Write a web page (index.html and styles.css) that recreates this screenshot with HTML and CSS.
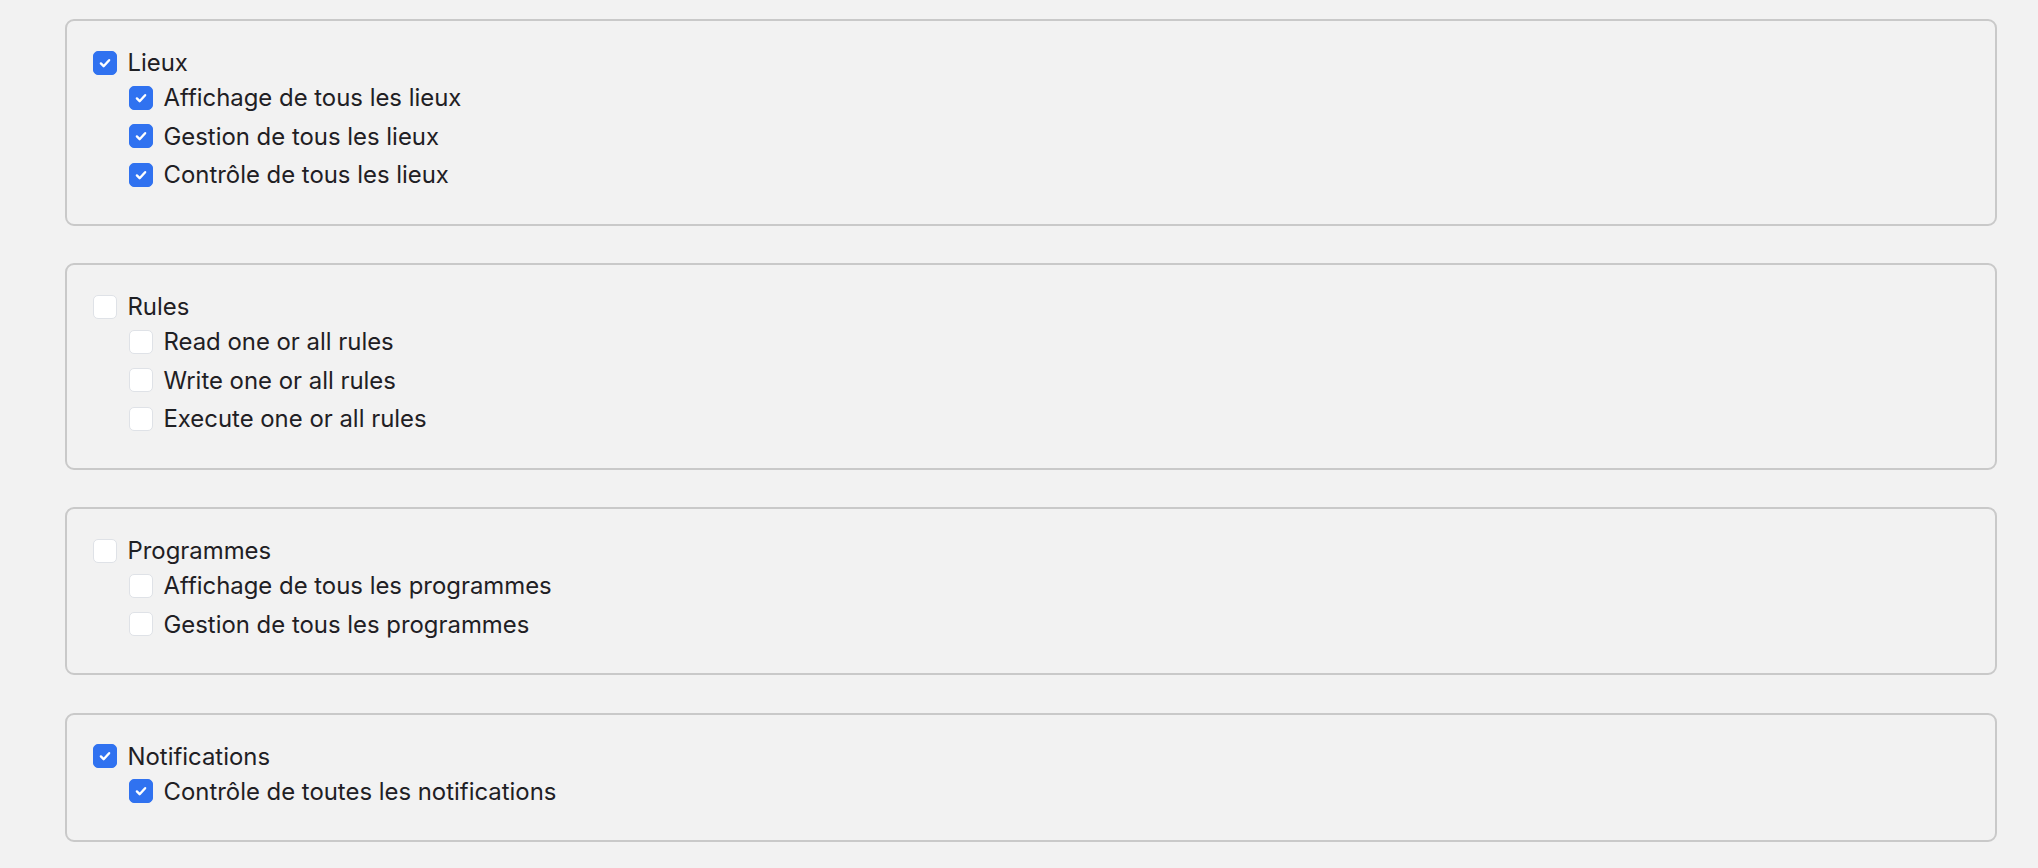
FILE: index.html
```html
<!DOCTYPE html>
<html lang="fr">
<head>
  <meta charset="UTF-8">
  <meta name="viewport" content="width=device-width, initial-scale=1.0">
  <title>Permissions</title>
  <link rel="stylesheet" href="styles.css">
</head>
<body>
  <div class="page">
    <!-- Lieux -->
    <div class="perm-group">
      <label class="perm-row parent"><span class="box checked"><svg viewBox="0 0 24 24"><polyline points="7.5,12.5 10.5,15.5 16.5,9"/></svg></span>Lieux</label>
      <div class="children">
        <label class="perm-row"><span class="box checked"><svg viewBox="0 0 24 24"><polyline points="7.5,12.5 10.5,15.5 16.5,9"/></svg></span>Affichage de tous les lieux</label>
        <label class="perm-row"><span class="box checked"><svg viewBox="0 0 24 24"><polyline points="7.5,12.5 10.5,15.5 16.5,9"/></svg></span>Gestion de tous les lieux</label>
        <label class="perm-row"><span class="box checked"><svg viewBox="0 0 24 24"><polyline points="7.5,12.5 10.5,15.5 16.5,9"/></svg></span>Contrôle de tous les lieux</label>
      </div>
    </div>

    <!-- Rules -->
    <div class="perm-group">
      <label class="perm-row parent"><span class="box"></span>Rules</label>
      <div class="children">
        <label class="perm-row"><span class="box"></span>Read one or all rules</label>
        <label class="perm-row"><span class="box"></span>Write one or all rules</label>
        <label class="perm-row"><span class="box"></span>Execute one or all rules</label>
      </div>
    </div>

    <!-- Programmes -->
    <div class="perm-group">
      <label class="perm-row parent"><span class="box"></span>Programmes</label>
      <div class="children">
        <label class="perm-row"><span class="box"></span>Affichage de tous les programmes</label>
        <label class="perm-row"><span class="box"></span>Gestion de tous les programmes</label>
      </div>
    </div>

    <!-- Notifications -->
    <div class="perm-group">
      <label class="perm-row parent"><span class="box checked"><svg viewBox="0 0 24 24"><polyline points="7.5,12.5 10.5,15.5 16.5,9"/></svg></span>Notifications</label>
      <div class="children">
        <label class="perm-row"><span class="box checked"><svg viewBox="0 0 24 24"><polyline points="7.5,12.5 10.5,15.5 16.5,9"/></svg></span>Contrôle de toutes les notifications</label>
      </div>
    </div>
  </div>
</body>
</html>
```

FILE: styles.css
```css
body {
  margin: 0;
  background-color: #f2f2f2;
  color: #1f2024;
  font-family: Inter, "Noto Sans", sans-serif;
}
.page {
  padding: 19px 41px 0 65px;
}
.perm-group {
  border: 2px solid #c9c9c9;
  border-radius: 9px;
  padding: 25.5px 26px 29.5px 25.5px;
  margin-bottom: 37.5px;
}
.perm-row {
  display: flex;
  align-items: center;
  height: 38.5px;
  font-size: 23.9px;
  cursor: pointer;
}
.perm-row.parent {
  height: 32px;
}
.children {
  padding-left: 36px;
}
.box {
  width: 22px;
  height: 22px;
  flex: none;
  margin-right: 11px;
  border: 1px solid #dfe2e7;
  border-radius: 5px;
  background-color: #ffffff;
  display: flex;
}
.box.checked {
  background-color: #3072f0;
  border-color: #3072f0;
}
.box svg {
  width: 22px;
  height: 22px;
  fill: none;
  stroke: #ffffff;
  stroke-width: 2.6;
  stroke-linecap: round;
  stroke-linejoin: round;
}
```
